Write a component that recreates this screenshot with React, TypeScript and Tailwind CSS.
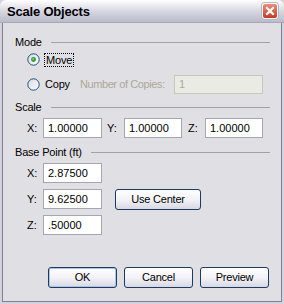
import React from 'react'

function Radio({ checked }: { checked?: boolean }) {
    return (
        <svg width="13" height="13" viewBox="0 0 13 13" className="shrink-0">
            <defs>
                <linearGradient id={checked ? 'rg1' : 'rg2'} x1="0" y1="0" x2="1" y2="1">
                    <stop offset="0" stopColor="#d8d8e0" />
                    <stop offset="1" stopColor="#ffffff" />
                </linearGradient>
            </defs>
            <circle cx="6.5" cy="6.5" r="5.7" fill={`url(#${checked ? 'rg1' : 'rg2'})`} stroke="#1c5180" strokeWidth="1" />
            {checked && (
                <>
                    <circle cx="6.5" cy="6.5" r="2.4" fill="#2a9a2a" />
                    <circle cx="6.2" cy="6.2" r="1.1" fill="#6fd46f" />
                </>
            )}
        </svg>
    )
}

function TextBox({ value, className = '', disabled }: { value: string; className?: string; disabled?: boolean }) {
    return (
        <div
            className={`flex items-center border px-[4px] ${
                disabled ? 'bg-[#ebebe6] border-[#c9c7ba] text-[#aca899]' : 'bg-white border-[#a5a6b4] text-black'
            } ${className}`}
        >
            {value}
        </div>
    )
}

function Button({ label, className = '', isDefault }: { label: string; className?: string; isDefault?: boolean }) {
    return (
        <div
            className={`flex items-center justify-center rounded-[3px] border border-[#1d3a62] bg-gradient-to-b from-white via-[#f3f3f7] to-[#d8d8e4] tracking-[-0.2px] text-black ${
                isDefault ? 'shadow-[inset_0_0_0_1px_#a9c4ee]' : ''
            } ${className}`}
        >
            {label}
        </div>
    )
}

function GroupHeader({ label }: { label: string }) {
    return (
        <div className="flex h-[13px] items-center gap-[9px]">
            <span className="leading-[13px] tracking-[-0.2px]">{label}</span>
            <div className="h-px flex-1 bg-[#a2a1a8]" />
        </div>
    )
}

export default function App() {
    return (
        <div
            className="flex h-[304px] w-[284px] flex-col bg-[#d4d3dd] text-[11px] text-black"
            style={{ fontFamily: '"Liberation Sans", Arial, sans-serif' }}
        >
            {/* title bar */}
            <div className="flex h-[23px] shrink-0 items-center justify-between rounded-t-[6px] border-b border-[#a9a8b8] bg-gradient-to-b from-[#ffffff] via-[#d8d8e3] to-[#babac9] pl-[7px] pr-[6px]">
                <span className="text-[13px] font-bold leading-none tracking-[-0.2px] text-black">Scale Objects</span>
                <div className="flex h-[16px] w-[16px] items-center justify-center rounded-[3px] border border-white bg-gradient-to-b from-[#ec8d78] to-[#c7361f] shadow-[0_0_0_1px_#b8b8c8]">
                    <svg width="10" height="10" viewBox="0 0 10 10">
                        <path d="M2 2 L8 8 M8 2 L2 8" stroke="#ffffff" strokeWidth="2.2" strokeLinecap="square" />
                    </svg>
                </div>
            </div>

            {/* client */}
            <div className="flex flex-1 flex-col px-[2px] pb-[2px]">
                <div className="flex flex-1 flex-col border-x border-b border-[#7f7f95] bg-[#e0dfe3] pl-[12px] pr-[11px]">
                    <div className="mt-[13px]">
                        <GroupHeader label="Mode" />
                    </div>

                    <div className="mt-[3px] flex h-[15px] items-center pl-[12px]">
                        <Radio checked />
                        <span className="ml-[4px] border border-dotted border-black px-px leading-[12px] tracking-[-0.2px]">Move</span>
                    </div>

                    <div className="mt-[8px] flex h-[19px] items-center pl-[12px]">
                        <Radio />
                        <span className="ml-[5px] tracking-[-0.2px]">Copy</span>
                        <span className="ml-[10px] tracking-[-0.4px] text-[#aca899]">Number of Copies:</span>
                        <TextBox value="1" disabled className="ml-auto mr-[7px] h-[19px] w-[89px]" />
                    </div>

                    <div className="mt-[7px]">
                        <GroupHeader label="Scale" />
                    </div>

                    <div className="mt-[4px] flex h-[20px] items-center pl-[12px]">
                        <span className="w-[16px]">X:</span>
                        <TextBox value="1.00000" className="h-[20px] w-[59px]" />
                        <span className="ml-[5px] w-[17px]">Y:</span>
                        <TextBox value="1.00000" className="h-[20px] w-[58px]" />
                        <span className="ml-[6px] w-[17px]">Z:</span>
                        <TextBox value="1.00000" className="h-[20px] w-[58px]" />
                    </div>

                    <div className="mt-[8px]">
                        <GroupHeader label="Base Point (ft)" />
                    </div>

                    <div className="mt-[4px] flex h-[20px] items-center pl-[12px]">
                        <span className="w-[16px]">X:</span>
                        <TextBox value="2.87500" className="h-[20px] w-[59px]" />
                    </div>

                    <div className="mt-[5px] flex h-[22px] items-center pl-[12px]">
                        <span className="w-[16px]">Y:</span>
                        <TextBox value="9.62500" className="h-[20px] w-[59px]" />
                        <Button label="Use Center" className="ml-[13px] h-[21px] w-[86px]" />
                    </div>

                    <div className="mt-[5px] flex h-[20px] items-center pl-[12px]">
                        <span className="w-[16px]">Z:</span>
                        <TextBox value=".50000" className="h-[20px] w-[59px]" />
                    </div>

                    <div className="mt-[32px] flex justify-end gap-[7px] pr-px">
                        <Button label="OK" isDefault className="h-[21px] w-[69px]" />
                        <Button label="Cancel" className="h-[21px] w-[69px]" />
                        <Button label="Preview" className="h-[21px] w-[69px]" />
                    </div>
                </div>
            </div>
        </div>
    )
}
